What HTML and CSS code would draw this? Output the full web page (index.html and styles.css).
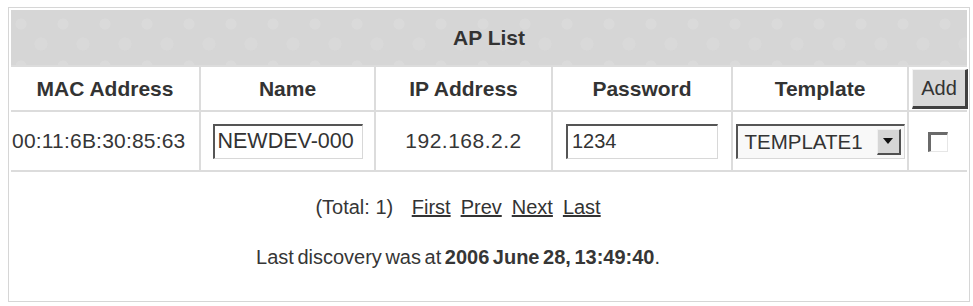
FILE: index.html
```html
<!DOCTYPE html>
<html>
<head>
<meta charset="utf-8">
<link rel="stylesheet" href="styles.css">
</head>
<body>
<div class="panel">
  <table class="aplist">
    <colgroup>
      <col class="c1"><col class="c2"><col class="c3"><col class="c4"><col class="c5"><col class="c6">
    </colgroup>
    <tr class="title-row"><th colspan="6" class="title">AP List</th></tr>
    <tr class="head-row">
      <th>MAC Address</th>
      <th>Name</th>
      <th>IP Address</th>
      <th>Password</th>
      <th>Template</th>
      <th class="add-cell"><span class="btn">Add</span></th>
    </tr>
    <tr class="data-row">
      <td class="mac">00:11:6B:30:85:63</td>
      <td><span class="field name-field">NEWDEV-000</span></td>
      <td class="ip">192.168.2.2</td>
      <td><span class="field pw-field">1234</span></td>
      <td><span class="select"><span class="sel-text">TEMPLATE1</span><span class="sel-arrow"><span class="tri"></span></span></span></td>
      <td><span class="check"></span></td>
    </tr>
    <tr class="foot-row">
      <td colspan="6" class="footer">
        <div class="pager">(Total: 1) <a class="lnk first">First</a><a class="lnk">Prev</a><a class="lnk">Next</a><a class="lnk">Last</a></div>
        <div class="disc">Last discovery was at <b>2006 June 28, 13:49:40</b>.</div>
      </td>
    </tr>
  </table>
</div>
</body>
</html>
```
FILE: styles.css
```css
html, body {
  margin: 0;
  padding: 0;
  background: #ffffff;
}
body {
  font-family: "Liberation Sans", Arial, sans-serif;
  color: #363636;
}
.panel {
  margin: 7px 0 0 8px;
  width: 962px;
  height: 295px;
  box-sizing: border-box;
  border: 1px solid #d6d6d6;
  padding: 2px;
}
.aplist {
  width: 956px;
  border-collapse: collapse;
  table-layout: fixed;
}
.c1 { width: 189px; }
.c2 { width: 175px; }
.c3 { width: 177px; }
.c4 { width: 180px; }
.c5 { width: 176px; }
.c6 { width: 59px; }

.aplist th, .aplist td {
  border: 2px solid #dcdcdc;
  padding: 0;
  text-align: center;
  vertical-align: middle;
}
.aplist tr > :first-child { border-left: none; }
.aplist tr > :last-child { border-right: none; }
.title-row th { border-top: none; }
.foot-row td { border-bottom: none; }

.aplist th.title {
  height: 55px;
  border-bottom: none;
  background-color: #d6d6d6;
  background-image:
    radial-gradient(circle at 10px 14px, rgba(255,255,255,0.10) 0 5px, transparent 6px),
    radial-gradient(circle at 30px 34px, rgba(255,255,255,0.08) 0 6px, transparent 7px);
  background-size: 42px 42px;
  font-size: 21px;
  font-weight: bold;
  color: #333;
}

.head-row th {
  height: 42px;
  font-size: 21px;
  font-weight: bold;
  color: #333;
}
.aplist th.add-cell {
  padding: 1px 0 0 3px;
  text-align: left;
}
.btn {
  display: inline-flex;
  align-items: center;
  justify-content: center;
  box-sizing: border-box;
  width: 56px;
  height: 40px;
  background: #d8d8d8;
  border-style: solid;
  border-width: 1px 3px 3px 1px;
  border-color: #f4f4f4 #404040 #404040 #f4f4f4;
  font-size: 20px;
  font-weight: normal;
  color: #333;
}

.data-row td {
  height: 58px;
  font-size: 21px;
}
.aplist td.mac {
  text-align: left;
  padding-left: 1px;
  white-space: nowrap;
  letter-spacing: 0.2px;
}
.aplist td.ip { letter-spacing: 0.5px; }

.field {
  display: inline-flex;
  align-items: center;
  box-sizing: border-box;
  height: 35px;
  padding-left: 4px;
  background: #fff;
  border-style: solid;
  border-width: 2px 1px 1px 2px;
  border-color: #555555 #d8d8d8 #d8d8d8 #555555;
  text-align: left;
  vertical-align: middle;
  font-size: 20px;
  color: #333;
}
.name-field { width: 150px; font-size: 21.5px; padding-left: 3px; }
.pw-field { width: 152px; }

.select {
  display: inline-flex;
  align-items: center;
  box-sizing: border-box;
  width: 169px;
  height: 35px;
  background: #f8f8f8;
  border-style: solid;
  border-width: 2px 1px 1px 2px;
  border-color: #555555 #d8d8d8 #d8d8d8 #555555;
  vertical-align: middle;
  padding: 0 3px 0 7px;
}
.sel-text {
  flex: 1;
  text-align: left;
  font-size: 20.5px;
  color: #333;
}
.sel-arrow {
  display: flex;
  align-items: center;
  justify-content: center;
  box-sizing: border-box;
  width: 24px;
  height: 26px;
  background: #d6d6d6;
  border-style: solid;
  border-width: 1px 2px 2px 1px;
  border-color: #f0f0f0 #505050 #505050 #f0f0f0;
}
.tri {
  width: 0;
  height: 0;
  border-left: 5px solid transparent;
  border-right: 5px solid transparent;
  border-top: 6px solid #111;
}

.check {
  display: inline-block;
  box-sizing: border-box;
  width: 20px;
  height: 20px;
  background: #fff;
  border-style: solid;
  border-width: 3px 1px 1px 3px;
  border-color: #6a6a6a #e6e6e6 #e6e6e6 #6a6a6a;
  vertical-align: middle;
}

.aplist td.footer {
  height: 129px;
  vertical-align: top;
  padding-right: 62px;
  font-size: 20px;
  line-height: 24px;
}
.pager {
  margin-top: 23px;
}
.lnk {
  color: #333;
  text-decoration: underline;
  margin-left: 10px;
}
.lnk.first { margin-left: 13px; }
.disc {
  margin-top: 26px;
  word-spacing: -2px;
}
.disc b { font-weight: bold; }
```
